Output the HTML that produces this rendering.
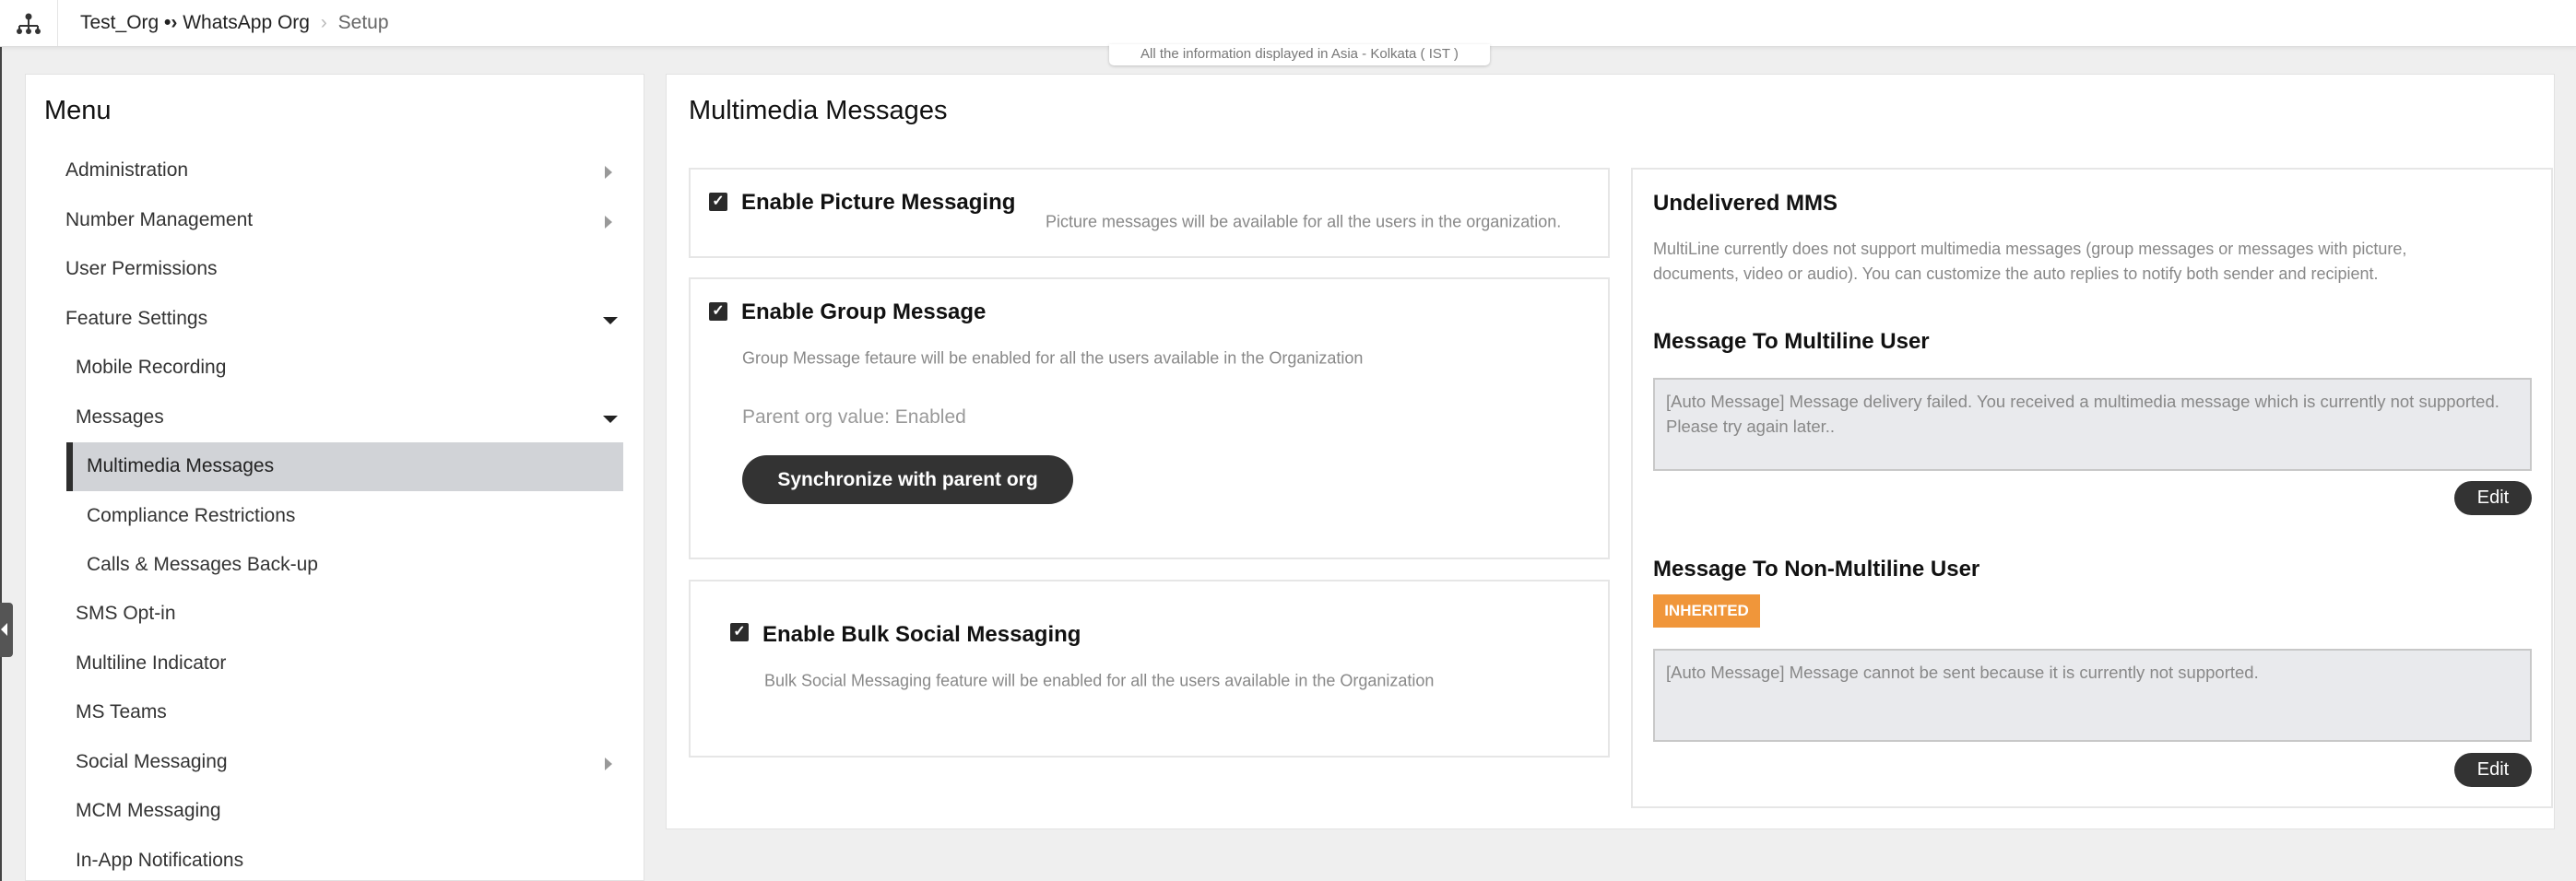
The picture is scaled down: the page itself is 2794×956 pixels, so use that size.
<!DOCTYPE html>
<html style="overflow:hidden"><head><meta charset="utf-8"><style>
*{box-sizing:border-box;margin:0;padding:0}
html,body{width:2794px;height:956px;overflow:hidden}
body{background:#efefef;font-family:"Liberation Sans",sans-serif;position:relative;color:#222}
.a{position:absolute;white-space:nowrap}
.hdr{position:absolute;left:0;top:0;width:2794px;height:51px;background:#fff;border-bottom:1px solid #ddd;box-shadow:0 2px 4px rgba(0,0,0,.06)}
.panel{position:absolute;background:#fff;border:1px solid #e2e2e2}
.box{position:absolute;border:2px solid #e6e6e6;background:#fff}
.mi{position:absolute;font-size:21px;color:#333;white-space:nowrap;transform:translateY(-50%)}
.arr{position:absolute;width:0;height:0;border-top:7px solid transparent;border-bottom:7px solid transparent;border-left:8px solid #999;transform:translateY(-50%)}
.dn{position:absolute;width:0;height:0;border-left:8px solid transparent;border-right:8px solid transparent;border-top:8px solid #222;transform:translateY(-50%)}
.cb{position:absolute;width:20px;height:20px;background:#2b2b2b;border-radius:2px;color:#fff;font-size:16px;line-height:20px;text-align:center;font-weight:bold}
.lbl{position:absolute;font-size:24px;font-weight:bold;color:#111;white-space:nowrap;transform:translateY(-50%)}
.desc{position:absolute;font-size:18px;color:#888;white-space:nowrap;transform:translateY(-50%)}
.btn{position:absolute;background:#333;color:#fff;font-weight:bold;border-radius:30px;text-align:center}
.ta{position:absolute;background:#e9eaed;border:2px solid #c8c8c8;font-size:18.5px;color:#888;padding:10px 12px;line-height:27px;white-space:nowrap}
</style></head><body>
<div style="position:absolute;left:0;top:0;width:2px;height:956px;background:#444"></div>
<div class="hdr">
  <div style="position:absolute;left:62px;top:0;width:1px;height:50px;background:#e5e5e5"></div>
  <svg style="position:absolute;left:17px;top:14px" width="28" height="24" viewBox="0 0 28 24"><circle cx="14" cy="4" r="3.5" fill="#333"/><path d="M14 7v7M4 14h20M4 14v4M14 14v4M24 14v4" stroke="#333" stroke-width="2" fill="none"/><circle cx="4" cy="20" r="3" fill="#333"/><circle cx="14" cy="20" r="3" fill="#333"/><circle cx="24" cy="20" r="3" fill="#333"/></svg>
  <div class="a" style="left:87px;top:13px;font-size:21px;color:#222">Test_Org <span style="font-weight:bold">•›</span> WhatsApp Org <span style="color:#bbb;margin:0 6px">›</span> <span style="color:#666">Setup</span></div>
</div>
<div class="a" style="left:1203px;top:48px;width:413px;height:23px;background:#fff;border-radius:0 0 5px 5px;box-shadow:0 1px 3px rgba(0,0,0,.2);font-size:15px;color:#777;text-align:center;line-height:22px">All the information displayed in Asia - Kolkata ( IST )</div>

<div style="position:absolute;left:0;top:654px;width:14px;height:59px;background:#555;border-radius:0 4px 4px 0"></div>
<div style="position:absolute;left:1px;top:676px;width:0;height:0;border-top:7px solid transparent;border-bottom:7px solid transparent;border-right:7px solid #fff"></div>

<div class="panel" style="left:27px;top:80px;width:672px;height:876px"></div>
<div class="a" style="left:48px;top:104px;font-size:29px;color:#111">Menu</div>
<div class="mi" style="left:71px;top:185px">Administration</div><div class="arr" style="left:656px;top:187px"></div>
<div class="mi" style="left:71px;top:239px">Number Management</div><div class="arr" style="left:656px;top:241px"></div>
<div class="mi" style="left:71px;top:292px">User Permissions</div>
<div class="mi" style="left:71px;top:346px">Feature Settings</div><div class="dn" style="left:654px;top:348px"></div>
<div class="mi" style="left:82px;top:399px">Mobile Recording</div>
<div class="mi" style="left:82px;top:453px">Messages</div><div class="dn" style="left:654px;top:455px"></div>
<div style="position:absolute;left:72px;top:480px;width:604px;height:53px;background:#d1d3d7;border-left:7px solid #2e2e2e"></div>
<div class="mi" style="left:94px;top:506px;color:#222">Multimedia Messages</div>
<div class="mi" style="left:94px;top:560px">Compliance Restrictions</div>
<div class="mi" style="left:94px;top:613px">Calls &amp; Messages Back-up</div>
<div class="mi" style="left:82px;top:666px">SMS Opt-in</div>
<div class="mi" style="left:82px;top:720px">Multiline Indicator</div>
<div class="mi" style="left:82px;top:773px">MS Teams</div>
<div class="mi" style="left:82px;top:827px">Social Messaging</div><div class="arr" style="left:656px;top:829px"></div>
<div class="mi" style="left:82px;top:880px">MCM Messaging</div>
<div class="mi" style="left:82px;top:934px">In-App Notifications</div>

<div class="panel" style="left:722px;top:80px;width:2049px;height:820px"></div>
<div class="a" style="left:747px;top:104px;font-size:29px;color:#111">Multimedia Messages</div>

<div class="box" style="left:747px;top:182px;width:999px;height:98px"></div>
<div class="cb" style="left:769px;top:209px">✓</div>
<div class="lbl" style="left:804px;top:220px">Enable Picture Messaging</div>
<div class="desc" style="left:1134px;top:241px">Picture messages will be available for all the users in the organization.</div>

<div class="box" style="left:747px;top:301px;width:999px;height:306px"></div>
<div class="cb" style="left:769px;top:328px">✓</div>
<div class="lbl" style="left:804px;top:339px">Enable Group Message</div>
<div class="desc" style="left:805px;top:389px">Group Message fetaure will be enabled for all the users available in the Organization</div>
<div class="a" style="left:805px;top:441px;font-size:21px;color:#999">Parent org value: Enabled</div>
<div class="btn" style="left:805px;top:494px;width:359px;height:53px;line-height:53px;font-size:21px">Synchronize with parent org</div>

<div class="box" style="left:747px;top:629px;width:999px;height:193px"></div>
<div class="cb" style="left:792px;top:676px">✓</div>
<div class="lbl" style="left:827px;top:689px">Enable Bulk Social Messaging</div>
<div class="desc" style="left:829px;top:739px">Bulk Social Messaging feature will be enabled for all the users available in the Organization</div>

<div class="box" style="left:1769px;top:182px;width:1000px;height:695px"></div>
<div class="lbl" style="left:1793px;top:221px">Undelivered MMS</div>
<div class="a" style="left:1793px;top:257px;font-size:18px;color:#888;line-height:27px">MultiLine currently does not support multimedia messages (group messages or messages with picture,<br>documents, video or audio). You can customize the auto replies to notify both sender and recipient.</div>
<div class="lbl" style="left:1793px;top:371px">Message To Multiline User</div>
<div class="ta" style="left:1793px;top:410px;width:953px;height:101px">[Auto Message] Message delivery failed. You received a multimedia message which is currently not supported.<br>Please try again later..</div>
<div class="btn" style="left:2662px;top:522px;width:84px;height:37px;line-height:37px;font-size:20px;font-weight:normal">Edit</div>
<div class="lbl" style="left:1793px;top:618px">Message To Non-Multiline User</div>
<div class="a" style="left:1793px;top:645px;width:116px;height:36px;background:#f0963a;color:#fff;font-weight:bold;font-size:17px;line-height:36px;text-align:center">INHERITED</div>
<div class="ta" style="left:1793px;top:704px;width:953px;height:101px">[Auto Message] Message cannot be sent because it is currently not supported.</div>
<div class="btn" style="left:2662px;top:817px;width:84px;height:37px;line-height:37px;font-size:20px;font-weight:normal">Edit</div>
</body></html>
